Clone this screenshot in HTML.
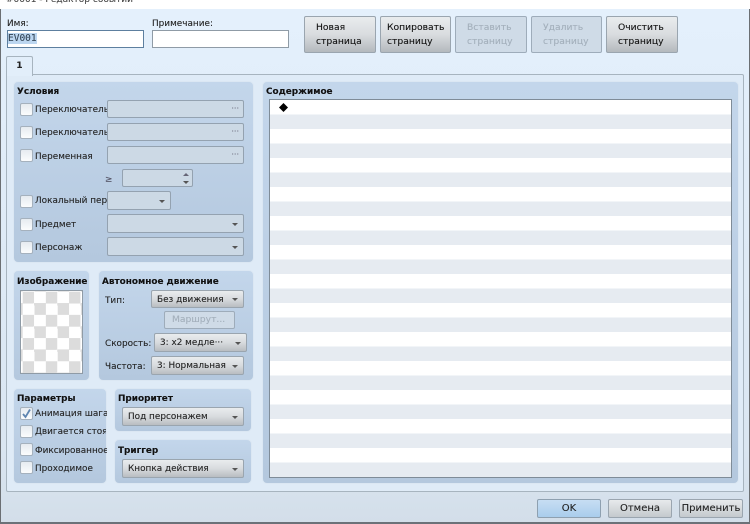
<!DOCTYPE html>
<html><head><meta charset="utf-8"><style>
html,body{margin:0;padding:0;width:750px;height:524px;overflow:hidden;background:#fff}
*{box-sizing:border-box}
body{font-family:"DejaVu Sans","Liberation Sans",sans-serif;font-size:8.9px;color:#222;position:relative;filter:blur(.35px);-webkit-text-stroke:.1px currentColor}
div,span.a{position:absolute}
.t{white-space:nowrap;line-height:12px;overflow:hidden;margin-top:1px}
.n{margin-top:0}
.h{font-weight:bold;color:#111;font-size:8.9px;white-space:nowrap;line-height:12px;margin-top:1px}
.g{background:linear-gradient(#c3d6eb,#b4c8de);border:1px solid #dbe7f3;border-radius:5px}
.btn{background:linear-gradient(#e9ecee,#d9dcdf 50%,#b4b9bd);border:1px solid #9aa5af;border-radius:2px;color:#111;font-size:9.2px;line-height:14px;padding:4px 0 0 11px;white-space:nowrap}
.dis{background:#cfdbe7;border:1px solid #9eacba;color:#a3afbb}
.cb{width:13px;height:13px;background:linear-gradient(#e6ebf0,#fbfcfd);border:1px solid #a5b1bd;border-radius:2px}
.f{background:#ccd9e5;border:1px solid #94a2b0;border-radius:2px}
.dd{background:linear-gradient(#e9ecee,#d8dbde 50%,#b9bdc1);border:1px solid #9aa5af;border-radius:2px;color:#222;font-size:8.9px;white-space:nowrap;line-height:18px}
.dots{right:4px;top:3px;color:#667;font-size:8px;line-height:10px;letter-spacing:0}
.ar{width:0;height:0;border-left:3px solid transparent;border-right:3px solid transparent;border-top:3px solid #555}
.input{background:#fff;border:1px solid #8f9ba6}
.b{font-size:10px;text-align:center;line-height:17px;color:#222;border-radius:2px;width:64px;height:19px;top:499px;border:1px solid #9aa5af;background:linear-gradient(#e7eaec,#c4c9cd)}
</style></head><body>
<div style="left:0;top:0;width:750px;height:524px;background:#fff"></div>
<div class="t n" style="left:6px;top:-6px;font-size:9px;color:#444;height:12px">#0001 - Редактор событий</div>
<div style="left:0;top:9px;width:750px;height:515px;background:linear-gradient(#e4f0fc,#dae6f2 85%,#d3dee9);border-left:1px solid #6b6f73;border-right:1px solid #6b6f73;border-bottom:2px solid #6b7178"></div>

<div class="t" style="left:7px;top:17px">Имя:</div>
<div class="t" style="left:152px;top:17px">Примечание:</div>
<div class="input" style="left:7px;top:30px;width:137px;height:18px;border-color:#5d7f9f"><span class="a" style="left:0;top:2px;height:11px;width:29px;background:#bcd6f0;font:9.5px/11px 'DejaVu Sans Mono','Liberation Mono',monospace;color:#345">EV001</span></div>
<div class="input" style="left:152px;top:30px;width:137px;height:18px"></div>

<div class="btn" style="left:304px;top:16px;width:72px;height:37px">Новая<br>страница</div>
<div class="btn" style="left:380px;top:16px;width:71px;height:37px;padding-left:6px">Копировать<br>страницу</div>
<div class="btn dis" style="left:455px;top:16px;width:72px;height:37px">Вставить<br>страницу</div>
<div class="btn dis" style="left:531px;top:16px;width:71px;height:37px">Удалить<br>страницу</div>
<div class="btn" style="left:606px;top:16px;width:72px;height:37px">Очистить<br>страницу</div>

<div style="left:6px;top:74px;width:738px;height:418px;border:1px solid #a7b4bf;background:#dfebf7;border-radius:2px"></div>
<div class="t n" style="left:6px;top:56px;width:27px;height:20px;background:#e2eefa;border:1px solid #a7b4bf;border-bottom:none;border-radius:2px 2px 0 0;text-align:center;font-weight:bold;line-height:18px">1</div>

<div class="g" style="left:13px;top:81px;width:241px;height:182px"></div>
<div class="h" style="left:17px;top:85px">Условия</div>

<div class="cb" style="left:20px;top:103px"></div><div class="t" style="left:35px;top:103px;width:72px">Переключатель</div>
<div class="f" style="left:107px;top:100px;width:137px;height:18px"><div class="dots">···</div></div>
<div class="cb" style="left:20px;top:126px"></div><div class="t" style="left:35px;top:126px;width:72px">Переключатель</div>
<div class="f" style="left:107px;top:123px;width:137px;height:18px"><div class="dots">···</div></div>
<div class="cb" style="left:20px;top:149px"></div><div class="t" style="left:35px;top:150px">Переменная</div>
<div class="f" style="left:107px;top:146px;width:137px;height:18px"><div class="dots">···</div></div>
<div class="t" style="left:105px;top:173px;color:#556">≥</div>
<div class="f" style="left:122px;top:169px;width:71px;height:18px"><div class="ar" style="right:3px;top:3px;border-top:none;border-bottom:3px solid #667"></div><div class="ar" style="right:3px;top:11px"></div></div>
<div class="cb" style="left:20px;top:195px"></div><div class="t" style="left:35px;top:194px;width:72px">Локальный переключатель</div>
<div class="f" style="left:107px;top:191px;width:64px;height:19px"><div class="ar" style="right:5px;top:8px"></div></div>
<div class="cb" style="left:20px;top:218px"></div><div class="t" style="left:35px;top:218px">Предмет</div>
<div class="f" style="left:107px;top:214px;width:137px;height:19px"><div class="ar" style="right:5px;top:8px"></div></div>
<div class="cb" style="left:20px;top:241px"></div><div class="t" style="left:35px;top:241px">Персонаж</div>
<div class="f" style="left:107px;top:237px;width:137px;height:19px"><div class="ar" style="right:5px;top:8px"></div></div>

<div class="g" style="left:13px;top:270px;width:77px;height:111px"></div>
<div class="h" style="left:17px;top:275px">Изображение</div>
<div style="left:20px;top:290px;width:63px;height:84px;border:1px solid #8f9ba6;background-color:#fff;background-image:conic-gradient(#fff 25%,#dcdcdc 0 50%,#fff 0 75%,#dcdcdc 0);background-size:23.2px 23.2px;background-position:1.7px .7px"></div>

<div class="g" style="left:98px;top:270px;width:156px;height:111px"></div>
<div class="h" style="left:102px;top:275px">Автономное движение</div>
<div class="t" style="left:105px;top:294px">Тип:</div>
<div class="dd" style="left:151px;top:290px;width:93px;height:18px;padding-left:5px">Без движения<div class="ar" style="right:5px;top:7px"></div></div>
<div class="btn dis" style="left:164px;top:311px;width:71px;height:18px;padding:1px 0 0 7px;color:#a3afbb">Маршрут...</div>
<div class="t" style="left:105px;top:337px">Скорость:</div>
<div class="dd" style="left:154px;top:333px;width:93px;height:19px;padding-left:5px">3: x2 медле···<div class="ar" style="right:5px;top:8px"></div></div>
<div class="t" style="left:105px;top:360px">Частота:</div>
<div class="dd" style="left:151px;top:356px;width:93px;height:19px;padding-left:5px">3: Нормальная<div class="ar" style="right:5px;top:8px"></div></div>

<div class="g" style="left:13px;top:388px;width:94px;height:96px"></div>
<div class="h" style="left:17px;top:392px">Параметры</div>
<div class="cb" style="left:20px;top:407px"><svg class="a" style="position:absolute;left:0;top:0" width="11" height="11"><path d="M2 6 L4.5 9 L9 1.5" fill="none" stroke="#5f85b0" stroke-width="1.8"/></svg></div><div class="t" style="left:35px;top:407px;width:72px">Анимация шага</div>
<div class="cb" style="left:20px;top:425px"></div><div class="t" style="left:35px;top:425px;width:71px">Двигается стоя</div>
<div class="cb" style="left:20px;top:443px"></div><div class="t" style="left:35px;top:444px;width:72px">Фиксированное</div>
<div class="cb" style="left:20px;top:461px"></div><div class="t" style="left:35px;top:462px">Проходимое</div>

<div class="g" style="left:114px;top:388px;width:138px;height:44px"></div>
<div class="h" style="left:118px;top:392px">Приоритет</div>
<div class="dd" style="left:122px;top:407px;width:122px;height:19px;padding-left:5px">Под персонажем<div class="ar" style="right:5px;top:8px"></div></div>
<div class="g" style="left:114px;top:439px;width:138px;height:45px"></div>
<div class="h" style="left:118px;top:444px">Триггер</div>
<div class="dd" style="left:122px;top:459px;width:122px;height:19px;padding-left:5px">Кнопка действия<div class="ar" style="right:5px;top:8px"></div></div>

<div class="g" style="left:262px;top:81px;width:477px;height:403px"></div>
<div class="h" style="left:266px;top:85px">Содержимое</div>
<div style="left:269px;top:99px;width:463px;height:379px;border:1px solid #7f8c98;background:repeating-linear-gradient(#fff 0 14.5px,#e6ebf1 14.5px 29px)"></div>
<svg style="position:absolute;left:279px;top:103px" width="10" height="9"><path d="M4.5 0 L9 4.5 L4.5 9 L0 4.5Z" fill="#000"/></svg>

<div class="t n b" style="left:537px;background:linear-gradient(#c7def3,#a9cdec);border-color:#8ea0b0">OK</div>
<div class="t n b" style="left:608px">Отмена</div>
<div class="t n b" style="left:679px">Применить</div>
</body></html>
